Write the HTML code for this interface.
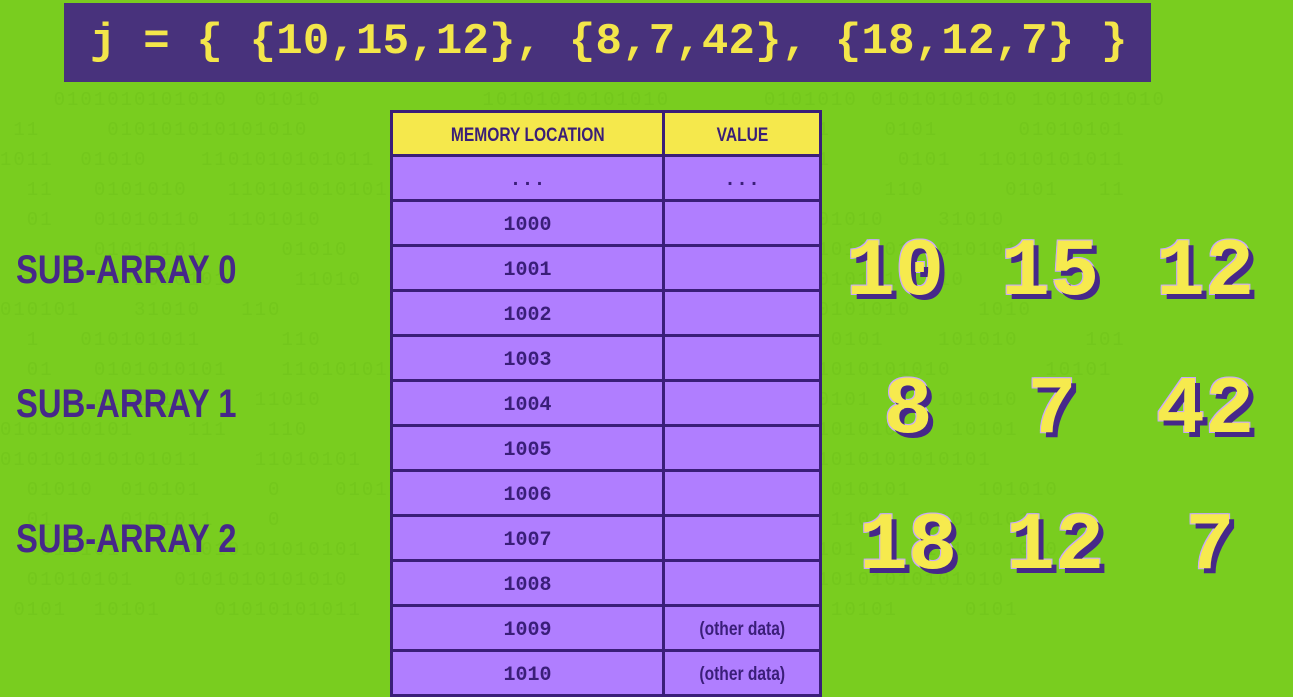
<!DOCTYPE html>
<html><head><style>
body{margin:0;width:1293px;height:697px;overflow:hidden;background:#79cd1f;position:relative;font-family:"Liberation Sans",sans-serif}
.bg{position:absolute;left:0;top:85px;width:1293px;font-family:"Liberation Mono",monospace;font-size:19px;line-height:30px;color:#73c71c;white-space:pre;letter-spacing:2px}
.bar{position:absolute;left:64px;top:3px;width:1087px;height:79px;background:#48327c}
.bar span{position:absolute;left:26px;top:14px;font-family:"Liberation Mono",monospace;font-weight:bold;font-size:44px;color:#f3e64a;white-space:pre;letter-spacing:0.2px}
table{position:absolute;left:390px;top:110px;border-collapse:collapse;background:#3a1e78;border:3px solid #3a1e78}
td{width:269px;height:38px;background:#b07eff;border:3px solid #3a1e78;text-align:center;font-family:"Liberation Mono",monospace;font-weight:bold;font-size:20px;color:#3a1e78;padding:4px 0 0}
td+td{width:154px}
th{height:37px;background:#f5e84c;border:3px solid #3a1e78;color:#3a1e78;font-size:19px;padding:4px 0 0}
th span,.od span{display:inline-block;transform:scaleX(0.82)}
.od{font-family:"Liberation Sans",sans-serif;font-weight:bold;font-size:19px}
.lab{position:absolute;left:16px;font-weight:bold;font-size:40px;color:#46288a;transform:scaleX(0.82);transform-origin:0 0;white-space:nowrap}
.n{position:absolute;font-family:"Liberation Mono",monospace;font-weight:bold;font-size:82px;color:#f6ea4e;text-shadow:5px 5px 0 #46288a,-1px -1px 0 #c9a6ff,1px -1px 0 #c9a6ff,-1px 1px 0 #c9a6ff;transform:translateX(-50%);line-height:1}
</style></head><body>
<div class="bg">    0101010101010  01010            10101010101010       0101010 01010101010 1010101010
 11     010101010101010              110101            0101 01    0101      01010101
1011  01010    1101010101011             10111            0101     0101  11010101011
  11   0101010   110101010101            1010101                  110      0101   11
  01   01010110  1101010               010101010            101010    31010
       01010101      01010                  1010101      1010101010101010101
       0101010101     11010                    11010101     101010101010
010101    31010   110                     01010101     0101 10101010     1010
  1   010101011      110      1                     10101     0101    101010     101
  01   0101010101    110101010                   11010101    1010101010       10101
       0101010     11010                        10101010101010101     101010
0101010101    111   110                        101010   010101010101   10101
010101010101011    11010101                       101010     1010101010101
  01010  010101     0    01010                  1    01010    010101     101010
  01     0101011    0                          0101  01011    110     10101010
   010101    01010101010101                       01010101010101     1010101010
  01010101   0101010101010                        1010101  1010101010101010
 0101  10101    01010101011                       010101      10101     0101</div>
<div class="bar"><span>j = { {10,15,12}, {8,7,42}, {18,12,7} }</span></div>
<table>
<tr><th><span>MEMORY LOCATION</span></th><th><span>VALUE</span></th></tr>
<tr><td>...</td><td>...</td></tr>
<tr><td>1000</td><td></td></tr>
<tr><td>1001</td><td></td></tr>
<tr><td>1002</td><td></td></tr>
<tr><td>1003</td><td></td></tr>
<tr><td>1004</td><td></td></tr>
<tr><td>1005</td><td></td></tr>
<tr><td>1006</td><td></td></tr>
<tr><td>1007</td><td></td></tr>
<tr><td>1008</td><td></td></tr>
<tr><td>1009</td><td class="od"><span>(other data)</span></td></tr>
<tr><td>1010</td><td class="od"><span>(other data)</span></td></tr>
</table>
<div class="lab" style="top:248px">SUB-ARRAY 0</div>
<div class="lab" style="top:382px">SUB-ARRAY 1</div>
<div class="lab" style="top:517px">SUB-ARRAY 2</div>
<div class="n" style="left:895px;top:232px">10</div>
<div class="n" style="left:1050px;top:232px">15</div>
<div class="n" style="left:1205px;top:232px">12</div>
<div class="n" style="left:908px;top:370px">8</div>
<div class="n" style="left:1052px;top:370px">7</div>
<div class="n" style="left:1205px;top:370px">42</div>
<div class="n" style="left:908px;top:506px">18</div>
<div class="n" style="left:1055px;top:506px">12</div>
<div class="n" style="left:1210px;top:506px">7</div>
</body></html>
